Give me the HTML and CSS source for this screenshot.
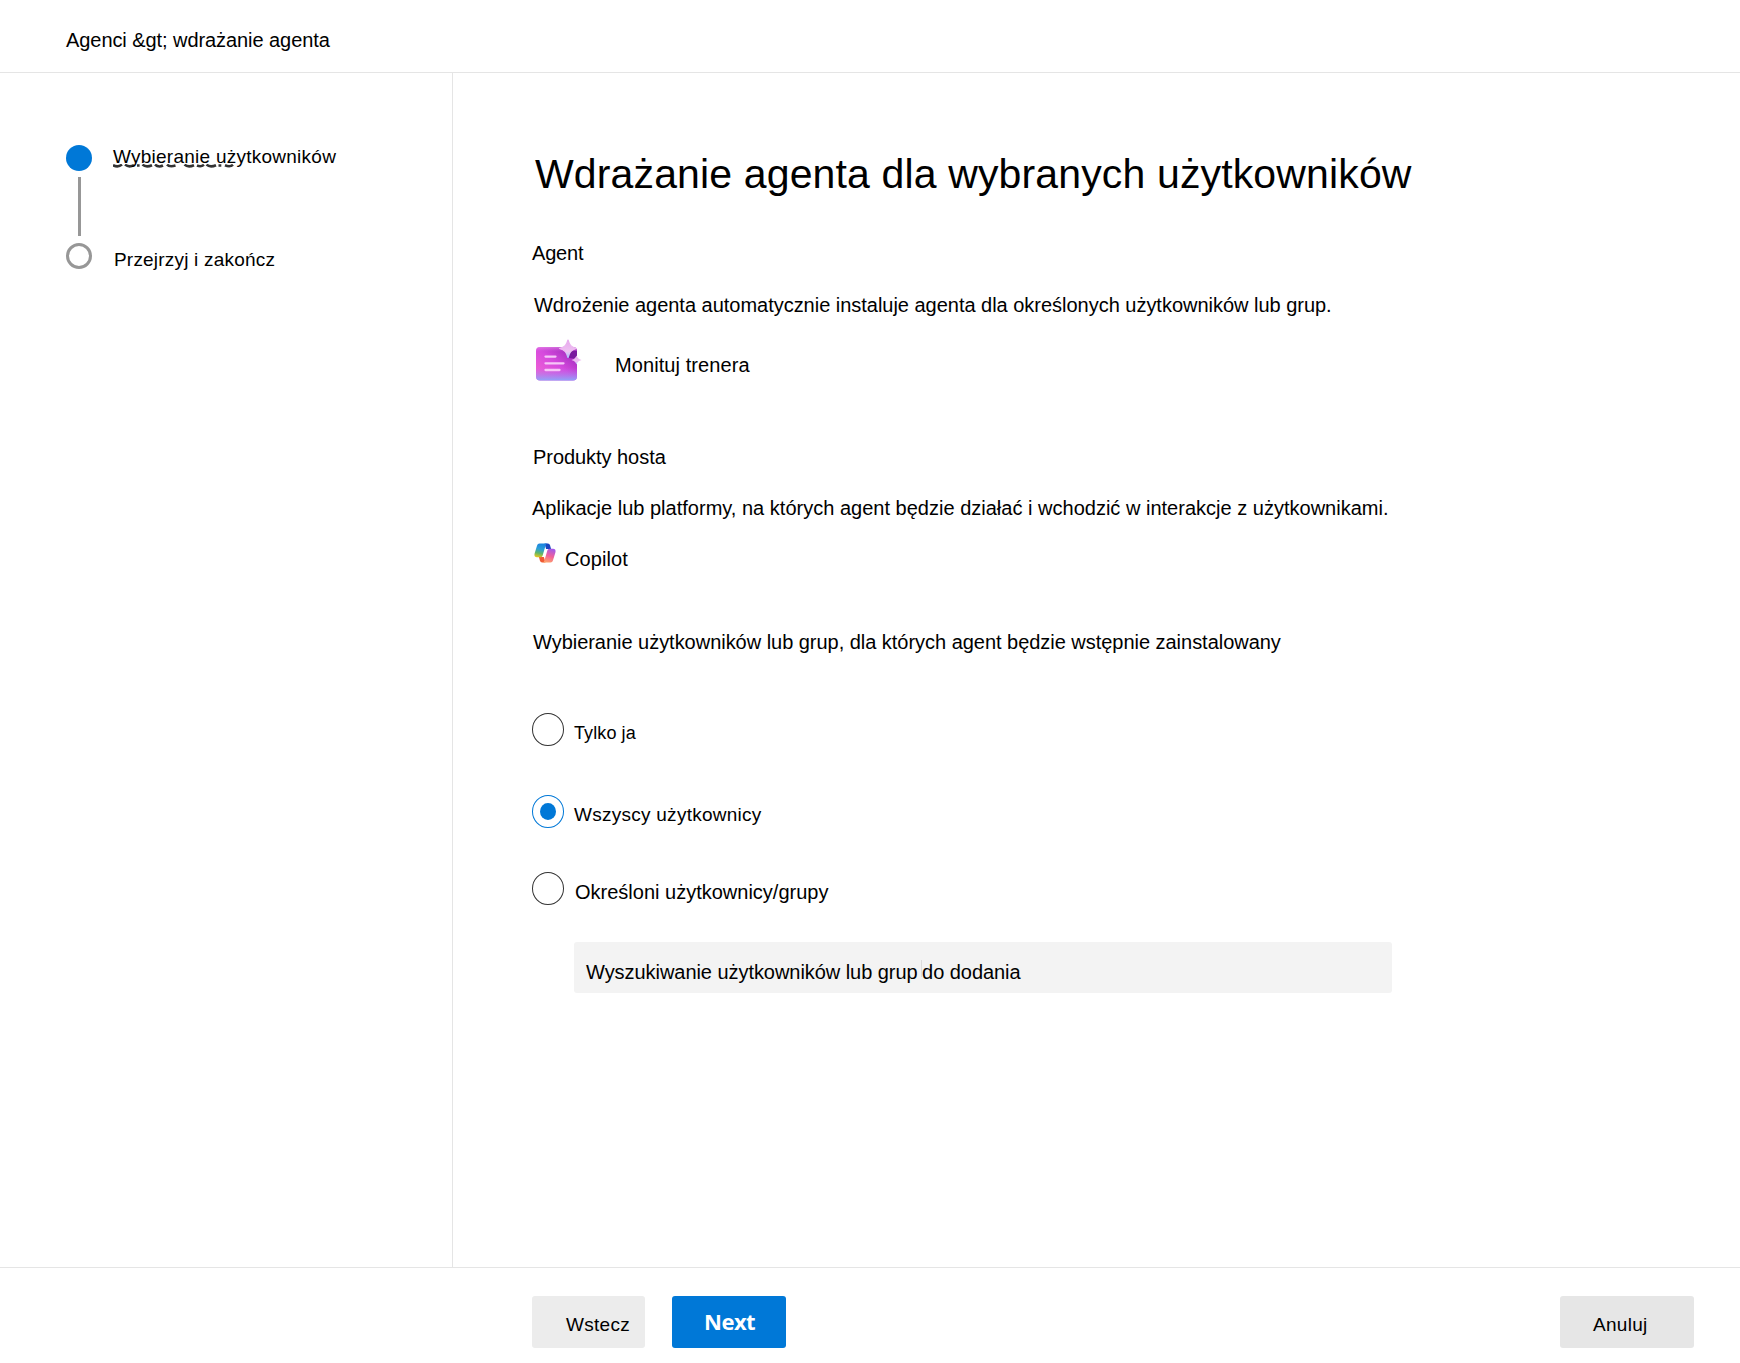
FILE: index.html
```html
<!DOCTYPE html>
<html lang="pl">
<head>
<meta charset="utf-8">
<title>Wdrażanie agenta</title>
<link rel="stylesheet" href="styles.css">
</head>
<body>
<div class="page">
  <header class="topbar">Agenci &amp;gt; wdrażanie agenta</header>
  <div class="middle">
    <nav class="steps">
      <div class="rail"><i class="dot"></i><i class="bar"></i><i class="ring"></i></div>
      <div class="labels">
        <div class="step step-current">Wybieranie użytkowników
          <svg class="marks" width="126" height="4" viewBox="0 0 126 4" fill="none" stroke="#333" stroke-width="2.6">
            <path d="M0 1.2Q5 3.8 9 .6M12 .6Q16 3.8 21 1.2M24 1.5h2.6M29.500 .6Q33 3.800 39 1.200M42 .6Q45.500 3.800 50 1.500M54 .6Q56.500 3.200 62.500 1.500M71.500 .6Q75 3.800 81 1.200M84 1.500Q88 3.200 91 .8M93.500 .6Q97 3.800 103 1.200M105.500 1.500h2.800M112 1.300Q117 3.500 120 .8"/>
          </svg>
        </div>
        <div class="step step-next">Przejrzyj i zakończ</div>
      </div>
    </nav>
    <main class="content">
      <h1 class="title">Wdrażanie agenta dla wybranych użytkowników</h1>
      <h2 class="agent-head">Agent</h2>
      <p class="agent-desc">Wdrożenie agenta automatycznie instaluje agenta dla określonych użytkowników lub grup.</p>
      <div class="agent-row">
        <svg class="agent-icon" width="46" height="42" viewBox="0 0 46 42">
          <defs>
            <linearGradient id="card" x1="0" y1="1" x2="1" y2="0">
              <stop offset="0" stop-color="#f767d2"/><stop offset=".5" stop-color="#d64ade"/><stop offset="1" stop-color="#8f22b2"/>
            </linearGradient>
            <linearGradient id="glow" x1="0" y1="0" x2="0" y2="1">
              <stop offset="0" stop-color="#f2a0ee" stop-opacity=".55"/><stop offset=".15" stop-color="#d860e0" stop-opacity="0"/><stop offset=".62" stop-color="#b070f0" stop-opacity="0"/><stop offset="1" stop-color="#8fa4fa"/>
            </linearGradient>
            <linearGradient id="spark" x1="0" y1="0" x2="0" y2="1">
              <stop offset="0" stop-color="#e6a8ec"/><stop offset=".65" stop-color="#efc0f2"/><stop offset="1" stop-color="#a9c8fa"/>
            </linearGradient>
          </defs>
          <rect x="0" y="8" width="41" height="33.500" rx="4" fill="url(#card)"/>
          <rect x="0" y="8" width="41" height="33.500" rx="4" fill="url(#glow)"/>
          <path d="M41 12v8l-8-1 1-7z" fill="#7a1a9e"/>
          <path d="M9.500 17.600h10M9.500 24.300h18M9.500 31h14" stroke="#f6c6f8" stroke-width="2.300" stroke-linecap="round"/>
          <path d="M32 1C33.500 6 35 8 40.500 9.500C35 11 33.500 13 32 18.500C30.500 13 29 11 23.500 9.500C29 8 30.500 6 32 1Z" fill="url(#spark)" stroke="url(#spark)" stroke-width="1.200" stroke-linejoin="round"/>
          <path d="M40.500 16.500C41.500 19 42.300 20 45.500 20.900C42.300 22 41.500 22.800 40.500 25.500C39.500 22.800 38.700 22 35.500 20.900C38.700 20 39.500 19 40.500 16.500Z" fill="url(#spark)"/>
        </svg>
        <span>Monituj trenera</span>
      </div>
      <h2 class="host-head">Produkty hosta</h2>
      <p class="host-desc">Aplikacje lub platformy, na których agent będzie działać i wchodzić w interakcje z użytkownikami.</p>
      <div class="host-row">
        <svg class="copilot-icon" width="22" height="20" viewBox="0 0 22 20">
          <defs>
            <linearGradient id="cool" x1=".5" y1="0" x2=".3" y2="1">
              <stop offset="0" stop-color="#1b83e0"/><stop offset=".4" stop-color="#2b9fd8"/><stop offset=".7" stop-color="#5fb56a"/><stop offset="1" stop-color="#e8c81a"/>
            </linearGradient>
            <linearGradient id="warm" x1=".6" y1="0" x2=".3" y2="1">
              <stop offset="0" stop-color="#a45ae8"/><stop offset=".5" stop-color="#f0609a"/><stop offset="1" stop-color="#ffa468"/>
            </linearGradient>
          </defs>
          <path d="M10.500 .5h3.300c1.200 0 1.900.7 2.300 2l1 3.500h-5z" fill="#1b45c0"/>
          <path d="M11.500 19.500H8.200c-1.200 0-1.900-.7-2.300-2l-1-3.500h5z" fill="#ef5a34"/>
          <path d="M5.500 .5h8c-1 0-1.500.8-1.900 2L8.800 12c-.4 1.400-1.100 2.300-2.600 2.300H3C.8 14.300 0 12.700.6 10.500L3 2.700C3.500 1.200 4.300.5 5.500.5z" fill="url(#cool)"/>
          <path d="M16.500 19.500H8.500c1 0 1.500-.8 1.900-2L13.200 8c.4-1.400 1.100-2.300 2.600-2.300H19c2.200 0 3 1.600 2.400 3.800L19 17.300c-.5 1.500-1.300 2.200-2.500 2.200z" fill="url(#warm)"/>
        </svg>
        <span>Copilot</span>
      </div>
      <h2 class="users-head">Wybieranie użytkowników lub grup, dla których agent będzie wstępnie zainstalowany</h2>
      <div class="options">
        <label class="option"><i class="radio"></i><span class="opt-me">Tylko ja</span></label>
        <label class="option"><i class="radio checked"></i><span class="opt-all">Wszyscy użytkownicy</span></label>
        <label class="option"><i class="radio"></i><span class="opt-some">Określoni użytkownicy/grupy</span></label>
      </div>
      <div class="search">Wyszukiwanie użytkowników lub grup<i class="caret"></i> do dodania</div>
    </main>
  </div>
  <footer class="actions">
    <div class="btn back">Wstecz</div>
    <div class="btn next">Next</div>
    <div class="btn cancel">Anuluj</div>
  </footer>
</div>
</body>
</html>
```
FILE: styles.css
```css
* { box-sizing: border-box; }
body {
  margin: 0;
  font: 20px/24px "Liberation Sans", Arial, sans-serif;
  color: #000;
  background: #fff;
}
h1, h2, p { margin: 0; font-size: 20px; font-weight: 400; white-space: nowrap; }
svg { display: block; }
i { display: block; }

.page { display: flex; flex-direction: column; width: 1740px; height: 1363px; overflow: hidden; }

.topbar {
  height: 73px;
  padding: 28px 66px 0;
  border-bottom: 1px solid #e5e5e5;
  letter-spacing: -0.07px;
}
.middle { display: flex; height: 1194px; }

.steps {
  display: flex;
  gap: 21px;
  width: 453px;
  padding: 72px 0 0 66px;
  border-right: 1px solid #e5e5e5;
}
.rail { display: flex; flex-direction: column; align-items: center; width: 26px; }
.dot { width: 26px; height: 26px; border-radius: 50%; background: #0078d7; }
.bar { width: 3px; height: 59px; margin: 6px 0 7px 1px; background: #979797; }
.ring { width: 26px; height: 26px; border: 3px solid #979797; border-radius: 50%; }
.labels { display: flex; flex-direction: column; gap: 79px; }
.step { position: relative; font-size: 19px; letter-spacing: 0.25px; white-space: nowrap; }
.step-next { padding-left: 1px; letter-spacing: 0.2px; }
.marks { position: absolute; left: 0; top: 19px; z-index: -1; }

.content { width: 1287px; padding: 77px 0 0 79px; }
.title { margin-left: 3px; font-size: 41px; line-height: 48px; letter-spacing: 0.14px; }
.agent-head { margin-top: 43px; letter-spacing: -0.2px; }
.agent-desc { margin: 28px 0 0 2px; letter-spacing: -0.02px; }
.agent-row { display: flex; gap: 33px; margin: 22px 0 0 4px; }
.agent-row span { margin-top: 14px; letter-spacing: 0.08px; }
.host-head { margin: 64px 0 0 1px; letter-spacing: -0.05px; }
.host-desc { margin-top: 27px; letter-spacing: 0.01px; }
.host-row { display: flex; gap: 9px; margin: 23px 0 0 2px; }
.host-row span { margin-top: 4px; letter-spacing: 0.08px; }
.users-head { margin: 59px 0 0 1px; letter-spacing: -0.03px; }

.options { margin-top: 59px; }
.option { display: flex; gap: 10px; height: 33px; }
.option + .option { margin-top: 49px; }
.option:last-child { margin-top: 44px; }
.option span { white-space: nowrap; }
.radio { display: flex; align-items: center; justify-content: center; width: 32px; height: 33px; border: 1px solid #333; border-radius: 50%; }
.radio.checked { border-color: #0078d7; }
.radio.checked::before { content: ""; width: 16px; height: 17px; border-radius: 50%; background: #0078d7; }
.opt-me { margin-top: 8px; font-size: 18px; letter-spacing: 0.1px; }
.opt-all { margin-top: 8px; font-size: 19px; letter-spacing: 0.26px; }
.opt-some { margin: 8px 0 0 1px; }

.search {
  width: 818px;
  height: 51px;
  margin: 37px 0 0 42px;
  padding: 18px 0 0 12px;
  border-radius: 3px;
  background: #f3f3f3;
  letter-spacing: -0.05px;
  white-space: nowrap;
}
.caret { display: inline-block; width: 1px; height: 17px; margin: 0 -5px 0 3px; background: #dcdcdc; vertical-align: 2px; }

.actions {
  display: flex;
  height: 96px;
  padding: 28px 46px 0 532px;
  border-top: 1px solid #e5e5e5;
}
.btn { height: 52px; border-radius: 3px; font-size: 19px; letter-spacing: 0.3px; white-space: nowrap; }
.back { width: 113px; padding: 17px 0 0 34px; background: #ececec; }
.next { width: 114px; margin-left: 27px; padding-left: 32px; background: #0078d7; color: #fff; font: 700 22px/50px "Open Sans", sans-serif; letter-spacing: -0.5px; }
.cancel { width: 134px; margin-left: auto; padding: 17px 0 0 33px; background: #e6e6e6; }
```
